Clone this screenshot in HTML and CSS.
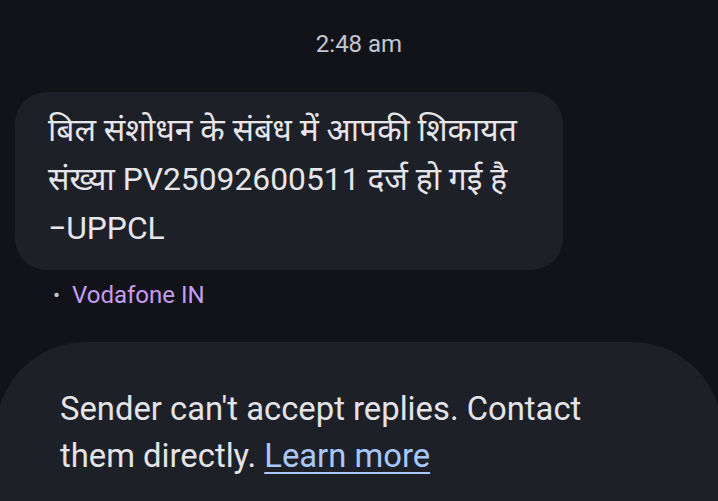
FILE: index.html
```html
<!DOCTYPE html>
<html lang="hi">
<head>
<meta charset="utf-8">
<link rel="stylesheet" href="styles.css">
</head>
<body>
<div class="screen">
  <div class="time">2:48 am</div>
  <div class="bubble">बिल संशोधन के संबंध में आपकी शिकायत संख्या PV25092600511 दर्ज हो गई है −UPPCL</div>
  <div class="meta"><span class="dot">•</span><span class="sim">Vodafone IN</span></div>
  <div class="notice">
    <p class="notice-text">Sender can't accept replies. Contact them directly. <a class="link" href="#">Learn more</a></p>
  </div>
</div>
</body>
</html>
```
FILE: styles.css
```css
html, body {
  margin: 0;
  padding: 0;
  background: #111319;
  overflow: hidden;
}
.screen {
  width: 718px;
  height: 501px;
  display: flex;
  flex-direction: column;
  font-family: Roboto, "Noto Sans Devanagari", "Noto Sans", sans-serif;
  color: #e3e3e8;
}
.time {
  text-align: center;
  font-size: 24px;
  line-height: 28px;
  color: #c4c6d0;
  margin-top: 30px;
}
.bubble {
  margin: 34px 0 0 15px;
  width: 548px;
  box-sizing: border-box;
  padding: 14px 28px 17px 33px;
  background: #1e2028;
  border-radius: 32px;
  font-size: 31.8px;
  line-height: 49px;
  color: #e6e6ea;
}
.meta {
  display: flex;
  align-items: center;
  margin: 12px 0 0 53px;
  font-size: 24px;
  line-height: 26px;
}
.dot {
  color: #c4c6d0;
  font-size: 21px;
  width: 19px;
}
.sim {
  color: #c79cf0;
}
.notice {
  margin: 34px -4px 0 -4px;
  flex: 1;
  background: #1e2028;
  border-radius: 90px 90px 0 0;
  padding: 44px 0 0 64px;
}
.notice-text {
  margin: 0;
  font-size: 32.8px;
  line-height: 47px;
  color: #e3e3e8;
  width: 560px;
}
.link {
  color: #a8c7fa;
  text-decoration: underline;
  text-decoration-thickness: 2px;
  text-underline-offset: 5px;
}
```
